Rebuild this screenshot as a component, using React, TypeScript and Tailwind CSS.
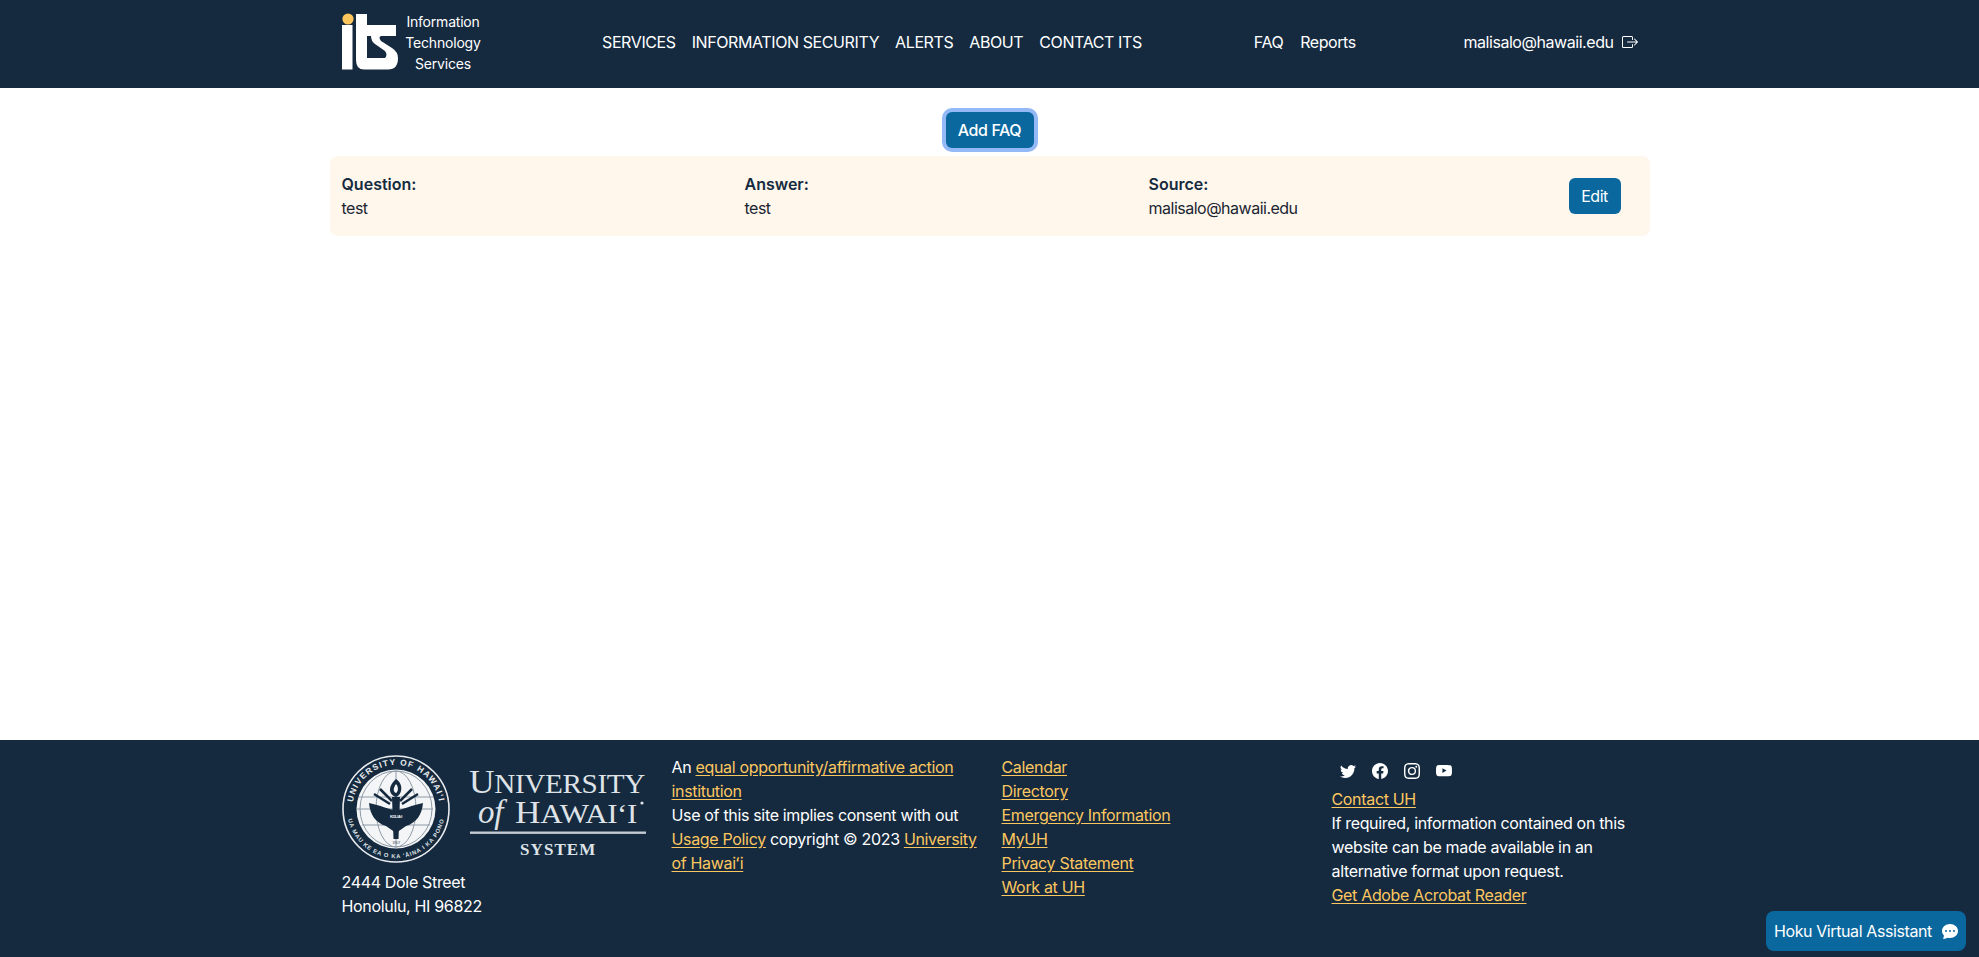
import React from 'react'
import { BsBoxArrowRight, BsChatDotsFill, BsFacebook, BsInstagram, BsTwitter, BsYoutube } from 'react-icons/bs'

const linkClass = 'text-[#fcc75f] underline underline-offset-2'

function ItsLogo() {
    return (
        <svg width="70" height="66" viewBox="0 0 70 66" className="shrink-0 -ml-[7px] -mt-[2px]">
            <circle cx="13" cy="11" r="5.6" fill="#fdc65c" />
            <rect x="7" y="17" width="10.5" height="44.5" fill="#fff" />
            <path d="M21 6 H32 V50 H21 Z" fill="#fff" />
            <path d="M21 44 V52 Q21 61.5 29 61.5 H53 Q63 61.5 63 50 Q63 44 57 40 L46 33 Q43 29 46 28 H61 V17 H32 V28 H36 Q36 33 40 36 L50 43 Q53 47 50 50 H32 V44 Z" fill="#fff" />
        </svg>
    )
}

function UhLogo() {
    const serif = '"Liberation Serif", serif'
    const sans = '"Liberation Sans", sans-serif'
    return (
        <svg width="306" height="108" viewBox="0 0 306 108" className="block">
            <defs>
                <path id="sealTop" d="M 11 60 A 43.5 43.5 0 1 1 97 60" />
                <path id="sealBottom" d="M 6 64 A 49 49 0 0 0 102 64" />
            </defs>
            {/* seal */}
            <circle cx="54" cy="54" r="53" fill="none" stroke="#e8ebee" strokeWidth="1.6" />
            <circle cx="54" cy="54" r="39.5" fill="#f4f5f6" />
            <g fill="none" stroke="#8d99a6" strokeWidth="1">
                <ellipse cx="54" cy="54" rx="20" ry="38" />
                <ellipse cx="54" cy="54" rx="36" ry="38" />
                <path d="M54 16 V92 M17 42 H91 M15 54 H91 M20 70 H88" />
            </g>
            <path d="M54 24 C62 29 60 40 54 42 C47 40 45 32 54 24 Z" fill="#152a3f" />
            <path d="M54 29 C57 32 56 37 54 38 C51 37 51 33 54 29 Z" fill="#f4f5f6" />
            <path d="M50 42 H58 L56.5 84 H51.5 Z" fill="#152a3f" />
            <path d="M27 48 C38 50 47 55 54 55 C61 55 70 50 81 48 C80 60 74 68 64 71 L54 78 L44 71 C34 68 28 60 27 48 Z" fill="#152a3f" />
            <path d="M32 39 L48 49 M38 34 L50 46 M76 39 L60 49 M70 34 L58 46" stroke="#152a3f" strokeWidth="2.5" />
            <text x="54" y="63" fontSize="4" fill="#f4f5f6" textAnchor="middle" fontFamily={sans} fontWeight="700">KŪLIAʻI</text>
            <text x="54" y="89" fontSize="4" fill="#44515e" textAnchor="middle" fontFamily={sans}>1907</text>
            <text fontSize="8.4" fontWeight="700" fill="#e8ebee" fontFamily={sans} letterSpacing="1.2">
                <textPath href="#sealTop" startOffset="50%" textAnchor="middle">UNIVERSITY OF HAWAIʻI</textPath>
            </text>
            <text fontSize="5.8" fontWeight="700" fill="#dfe3e7" fontFamily={sans} letterSpacing="0.8">
                <textPath href="#sealBottom" startOffset="50%" textAnchor="middle">UA MAU KE EA O KA ʻĀINA I KA PONO</textPath>
            </text>
            {/* wordmark */}
            <text x="127" y="38" fill="#dfe3e7" fontFamily={serif} fontSize="28" textLength="176" lengthAdjust="spacingAndGlyphs">
                <tspan fontSize="34">U</tspan>NIVERSITY
            </text>
            <text x="136" y="68" fill="#dfe3e7" fontFamily={serif} fontSize="33" fontStyle="italic" textLength="25" lengthAdjust="spacingAndGlyphs">of</text>
            <text x="173" y="68" fill="#dfe3e7" fontFamily={serif} fontSize="28" textLength="122" lengthAdjust="spacingAndGlyphs">
                <tspan fontSize="32">H</tspan>AWAI‘I
            </text>
            <circle cx="300" cy="48" r="1.6" fill="#dfe3e7" />
            <rect x="128" y="76.5" width="176" height="2.4" fill="#c3cad1" />
            <text x="178" y="100" fill="#dfe3e7" fontFamily={serif} fontSize="17" fontWeight="700" textLength="75" lengthAdjust="spacing">SYSTEM</text>
        </svg>
    )
}

function Header() {
    return (
        <header className="bg-[#152a3f] h-[88px] shrink-0 text-white tracking-[-0.45px]">
            <div className="w-[1320px] mx-auto px-3 pb-1 h-full flex items-center">
                <div className="w-[261px] flex items-center">
                    <ItsLogo />
                    <div className="text-sm leading-[21px] text-center w-[77px] tracking-[-0.2px]">
                        <p>Information</p>
                        <p>Technology</p>
                        <p>Services</p>
                    </div>
                </div>
                <nav className="w-[653px] flex gap-4 tracking-[-0.4px]">
                    <a>SERVICES</a>
                    <a>INFORMATION SECURITY</a>
                    <a>ALERTS</a>
                    <a>ABOUT</a>
                    <a>CONTACT ITS</a>
                </nav>
                <nav className="w-[210px] flex gap-[17px]">
                    <a>FAQ</a>
                    <a>Reports</a>
                </nav>
                <div className="flex items-center gap-2">
                    <span>malisalo@hawaii.edu</span>
                    <BsBoxArrowRight size={16} />
                </div>
            </div>
        </header>
    )
}

function FaqCard() {
    return (
        <div className="bg-[#fff7eb] rounded-lg px-3 py-4 grid grid-cols-[403px_404px_420px_auto] items-center text-[#1a2533] tracking-[-0.5px]">
            <div>
                <p className="font-semibold text-[#152a3f] tracking-normal">Question:</p>
                <p>test</p>
            </div>
            <div>
                <p className="font-semibold text-[#152a3f] tracking-normal">Answer:</p>
                <p>test</p>
            </div>
            <div>
                <p className="font-semibold text-[#152a3f] tracking-normal">Source:</p>
                <p>malisalo@hawaii.edu</p>
            </div>
            <button className="bg-[#0a689f] text-white rounded-md w-[52px] h-9">Edit</button>
        </div>
    )
}

function Footer() {
    return (
        <footer className="bg-[#152a3f] h-[217px] shrink-0 text-white tracking-[-0.33px]">
            <div className="w-[1320px] mx-auto pt-[15px] grid grid-cols-4">
                <div className="px-3">
                    <UhLogo />
                    <p className="mt-[7px]">2444 Dole Street</p>
                    <p>Honolulu, HI 96822</p>
                </div>
                <div className="px-3">
                    <p>An <a className={linkClass}>equal opportunity/affirmative action institution</a></p>
                    <p>Use of this site implies consent with out <a className={linkClass}>Usage Policy</a> copyright © 2023 <a className={linkClass}>University of Hawaiʻi</a></p>
                </div>
                <div className="px-3 flex flex-col items-start">
                    <a className={linkClass}>Calendar</a>
                    <a className={linkClass}>Directory</a>
                    <a className={linkClass}>Emergency Information</a>
                    <a className={linkClass}>MyUH</a>
                    <a className={linkClass}>Privacy Statement</a>
                    <a className={linkClass}>Work at UH</a>
                </div>
                <div className="px-3">
                    <div className="flex gap-4 h-[32px] pl-2 pt-[8px]">
                        <BsTwitter size={16} />
                        <BsFacebook size={16} />
                        <BsInstagram size={16} />
                        <BsYoutube size={16} />
                    </div>
                    <a className={linkClass}>Contact UH</a>
                    <p>If required, information contained on this website can be made available in an alternative format upon request.</p>
                    <a className={linkClass}>Get Adobe Acrobat Reader</a>
                </div>
            </div>
        </footer>
    )
}

export default function App() {
    return (
        <div className="relative h-screen flex flex-col bg-white font-['Inter',sans-serif] text-base leading-6 tracking-[-0.4px]">
            <Header />
            <main className="flex-1">
                <div className="w-[1320px] mx-auto">
                    <div className="flex justify-center pt-6 mb-2">
                        <button className="bg-[#0a689f] text-white font-medium rounded-md w-[88px] h-9 ring-4 ring-[#93b9f6]">Add FAQ</button>
                    </div>
                    <FaqCard />
                </div>
            </main>
            <Footer />
            <button className="absolute right-[13px] bottom-[6px] w-[200px] h-10 bg-[#0a689f] text-white rounded-lg flex items-center justify-between px-2">
                <span>Hoku Virtual Assistant</span>
                <BsChatDotsFill size={16} />
            </button>
        </div>
    )
}
